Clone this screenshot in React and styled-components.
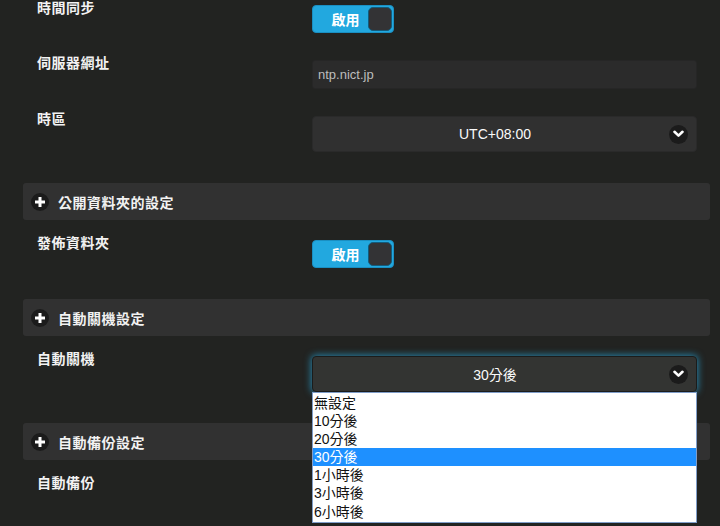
import React from "react";
import styled, { createGlobalStyle } from "styled-components";

const Global = createGlobalStyle`
  html, body { margin: 0; padding: 0; background: #222321; }
  body { font-family: "Noto Sans CJK TC", "Liberation Sans", sans-serif; overflow: hidden; }
  * { box-sizing: border-box; }
`;

const Page = styled.div`
  width: 720px;
  height: 527px;
  margin-top: -1px;
  background: #222321;
  padding: 0 10px 0 23px;
  overflow: hidden;
`;

const Row = styled.div`
  display: grid;
  grid-template-columns: 275px 1fr;
  padding: 0 13px 21px 14px;
  position: relative;
  z-index: ${(p) => (p.$raised ? 5 : "auto")};
`;

const Label = styled.div`
  color: #f2f2f2;
  font-size: 14px;
  font-weight: 700;
  line-height: 20px;
  letter-spacing: 0.5px;
  margin-top: -2px;
`;

const Control = styled.div`
  margin-top: 6px;
  position: relative;
`;

const Toggle = styled.div`
  width: 82px;
  height: 28px;
  border-radius: 4px;
  background: #22a8df;
  border: 1px solid #1a8fc2;
  display: flex;
  align-items: center;
  padding: 0 1px 0 0;
`;

const ToggleText = styled.span`
  flex: 1;
  text-align: center;
  color: #fff;
  font-weight: 700;
  font-size: 14px;
  padding-left: 10px;
`;

const Knob = styled.span`
  width: 24px;
  height: 24px;
  border-radius: 5px;
  background: #333335;
  border: 1px solid #145b7b;
`;

const TextInput = styled.div`
  height: 29px;
  border-radius: 3px;
  background: #2b2b2b;
  border: 1px solid #262626;
  color: #bdbdbd;
  font-family: "Liberation Sans", "Noto Sans CJK TC", sans-serif;
  font-size: 13px;
  display: flex;
  align-items: center;
  padding-left: 5px;
`;

const Select = styled.div`
  height: 36px;
  border-radius: 4px;
  background: ${(p) => (p.$open ? "#333432" : "#303030")};
  border: 1px solid ${(p) => (p.$open ? "#1b1c1b" : "#2a2a2a")};
  box-shadow: ${(p) => (p.$open ? "0 0 7px 1px rgba(40,160,210,0.75)" : "none")};
  display: flex;
  align-items: center;
  padding: 0 8px 0 20px;
  color: #fafafa;
  font-family: "Liberation Sans", "Noto Sans CJK TC", sans-serif;
  font-size: 14px;
`;

const SelectText = styled.span`
  flex: 1;
  text-align: center;
  padding-right: 12px;
`;

const Chevron = styled.span`
  width: 19px;
  height: 19px;
  border-radius: 50%;
  background: #1b1b1b;
  display: flex;
  align-items: center;
  justify-content: center;
`;

const Header = styled.div`
  height: 37px;
  margin: 10px 0 14px;
  border-radius: 3px;
  background: #313131;
  display: flex;
  align-items: center;
  padding-left: 8px;
  gap: 9px;
  color: #f2f2f2;
  font-size: 14px;
  font-weight: 700;
  letter-spacing: 0.5px;
`;

const PlusCircle = styled.span`
  width: 18px;
  height: 18px;
  border-radius: 50%;
  background: #1b1b1b;
  display: flex;
  align-items: center;
  justify-content: center;
`;

const List = styled.ul`
  position: absolute;
  top: 36px;
  left: 0;
  right: 0;
  margin: 0;
  padding: 1px 0;
  list-style: none;
  background: #fff;
  border: 1px solid #7f9dc9;
  z-index: 10;
  font-family: "Liberation Sans", "Noto Sans CJK TC", sans-serif;
  font-size: 14px;
`;

const Option = styled.li`
  height: 18.1px;
  line-height: 18px;
  padding-left: 1px;
  color: ${(p) => (p.$active ? "#fff" : "#111")};
  background: ${(p) => (p.$active ? "#1e90ff" : "transparent")};
`;

const ChevronIcon = () => (
  <Chevron>
    <svg width="11" height="8" viewBox="0 0 11 8">
      <path d="M1.5 1.8 L5.5 5.6 L9.5 1.8" stroke="#fff" strokeWidth="2.6" fill="none" strokeLinecap="round" strokeLinejoin="round" />
    </svg>
  </Chevron>
);

const Plus = () => (
  <PlusCircle>
    <svg width="12" height="12" viewBox="0 0 12 12">
      <path d="M6 1 V11 M1 6 H11" stroke="#fff" strokeWidth="3" />
    </svg>
  </PlusCircle>
);

const Switch = () => (
  <Toggle>
    <ToggleText>啟用</ToggleText>
    <Knob />
  </Toggle>
);

const options = ["無設定", "10分後", "20分後", "30分後", "1小時後", "3小時後", "6小時後"];

export default function App() {
  return (
    <>
      <Global />
      <Page>
        <Row>
          <Label>時間同步</Label>
          <Control><Switch /></Control>
        </Row>
        <Row>
          <Label>伺服器網址</Label>
          <Control><TextInput>ntp.nict.jp</TextInput></Control>
        </Row>
        <Row>
          <Label>時區</Label>
          <Control>
            <Select>
              <SelectText>UTC+08:00</SelectText>
              <ChevronIcon />
            </Select>
          </Control>
        </Row>
        <Header><Plus />公開資料夾的設定</Header>
        <Row>
          <Label>發佈資料夾</Label>
          <Control><Switch /></Control>
        </Row>
        <Header><Plus />自動關機設定</Header>
        <Row $raised>
          <Label>自動關機</Label>
          <Control>
            <Select $open>
              <SelectText>30分後</SelectText>
              <ChevronIcon />
            </Select>
            <List>
              {options.map((o) => (
                <Option key={o} $active={o === "30分後"}>{o}</Option>
              ))}
            </List>
          </Control>
        </Row>
        <Header><Plus />自動備份設定</Header>
        <Row>
          <Label>自動備份</Label>
          <Control><Switch /></Control>
        </Row>
      </Page>
    </>
  );
}
